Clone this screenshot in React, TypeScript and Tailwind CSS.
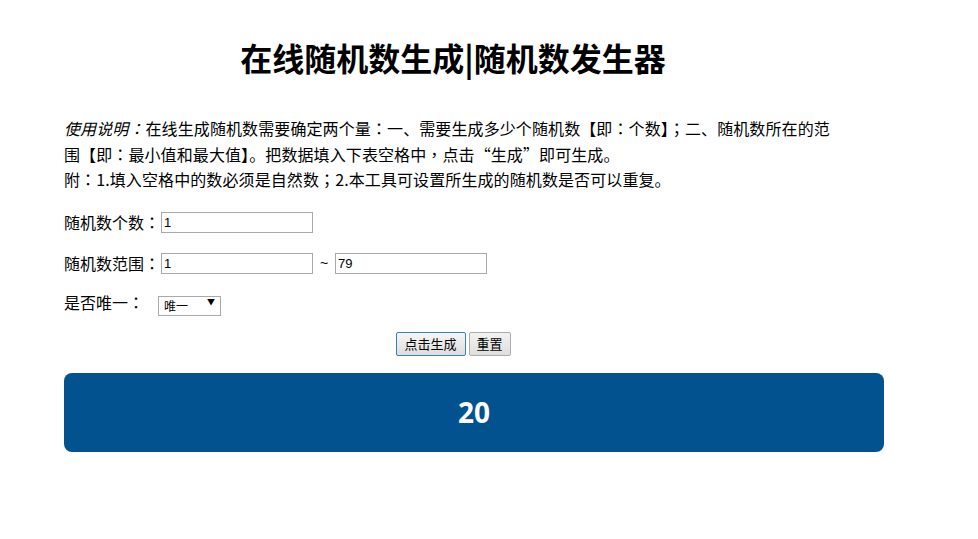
import React, { useState } from 'react';

const cjk = { fontFamily: '"Noto Sans CJK SC", "Noto Sans", sans-serif' };
const tc = { fontFamily: '"Noto Sans CJK TC", "Noto Sans CJK SC", sans-serif' };
const arial = { fontFamily: '"Liberation Sans", Arial, "Noto Sans CJK SC", sans-serif' };

// 冒号、分号、逗号居中显示
const Txt = ({ children }: { children: string }) => (
  <>
    {children.split(/([：；，])/).map((part, i) =>
      /^[：；，]$/.test(part) ? (
        <span key={i} style={tc}>
          {part}
        </span>
      ) : (
        <React.Fragment key={i}>{part}</React.Fragment>
      ),
    )}
  </>
);

const TextBox = ({ value }: { value: string }) => (
  <input
    type="text"
    defaultValue={value}
    style={arial}
    className="w-[152px] h-[21px] border border-[#a9a9a9] bg-white px-[2px] text-[13px] text-black outline-none"
  />
);

export default function App() {
  const [result] = useState(20);

  return (
    <div className="w-[978px] h-[539px] bg-white text-black overflow-hidden" style={cjk}>
      <div className="ml-[64px] w-[778px] flex flex-col">
        {/* 标题 */}
        <h1 className="mt-[37px] h-[40px] leading-[40px] text-center text-[32px] font-bold text-black">
          在线随机数生成|随机数发生器
        </h1>

        {/* 使用说明 */}
        <p className="mt-[39px] whitespace-nowrap text-[16px] leading-[25.5px] tracking-[0.1px]">
          <em className="italic pr-[1px]">
            <Txt>使用说明：</Txt>
          </em>
          <Txt>在线生成随机数需要确定两个量：一、需要生成多少个随机数【即：个数】；二、随机数所在的范</Txt>
          <br />
          <Txt>围【即：最小值和最大值】。把数据填入下表空格中，点击“生成”即可生成。</Txt>
          <br />
          <Txt>附：1.填入空格中的数必须是自然数；2.本工具可设置所生成的随机数是否可以重复。</Txt>
        </p>

        {/* 表单 */}
        <div className="mt-[19px] flex items-center h-[21px] text-[16px]">
          <span className="w-[97px]">
            <Txt>随机数个数：</Txt>
          </span>
          <TextBox value="1" />
        </div>

        <div className="mt-[20px] flex items-center h-[21px] text-[16px]">
          <span className="w-[97px]">
            <Txt>随机数范围：</Txt>
          </span>
          <TextBox value="1" />
          <span className="w-[22px] text-center text-[14px]" style={arial}>
            ~
          </span>
          <TextBox value="79" />
        </div>

        <div className="mt-[18px] flex items-center h-[20px] text-[16px]">
          <span className="w-[94px]">
            <Txt>是否唯一：</Txt>
          </span>
          <div className="relative w-[63px] h-[20px]">
            <select
              defaultValue="1"
              className="appearance-none w-full h-full border border-[#a9a9a9] bg-white pl-[5px] text-[12px] text-black outline-none"
            >
              <option value="1">唯一</option>
              <option value="0">可重复</option>
            </select>
            <span className="pointer-events-none absolute right-[6px] top-[3px] text-[8px] leading-[14px] text-black">
              ▼
            </span>
          </div>
        </div>

        <div className="mt-[20px] flex justify-center gap-[3px]">
          <button className="w-[70px] h-[24px] border border-[#3c7fb1] rounded-[2px] bg-gradient-to-b from-[#f6f6f6] to-[#dddddd] text-[13px] text-black">
            点击生成
          </button>
          <button className="w-[42px] h-[24px] border border-[#acacac] rounded-[2px] bg-gradient-to-b from-[#f2f2f2] to-[#dedede] text-[13px] text-black">
            重置
          </button>
        </div>

        {/* 结果 */}
        <div className="mt-[17px] w-[820px] h-[79px] rounded-[8px] bg-[#02528f] flex items-center justify-center">
          <span
            className="text-[28px] font-bold text-white"
            style={{ fontFamily: '"Open Sans", "Liberation Sans", sans-serif' }}
          >
            {result}
          </span>
        </div>
      </div>
    </div>
  );
}
